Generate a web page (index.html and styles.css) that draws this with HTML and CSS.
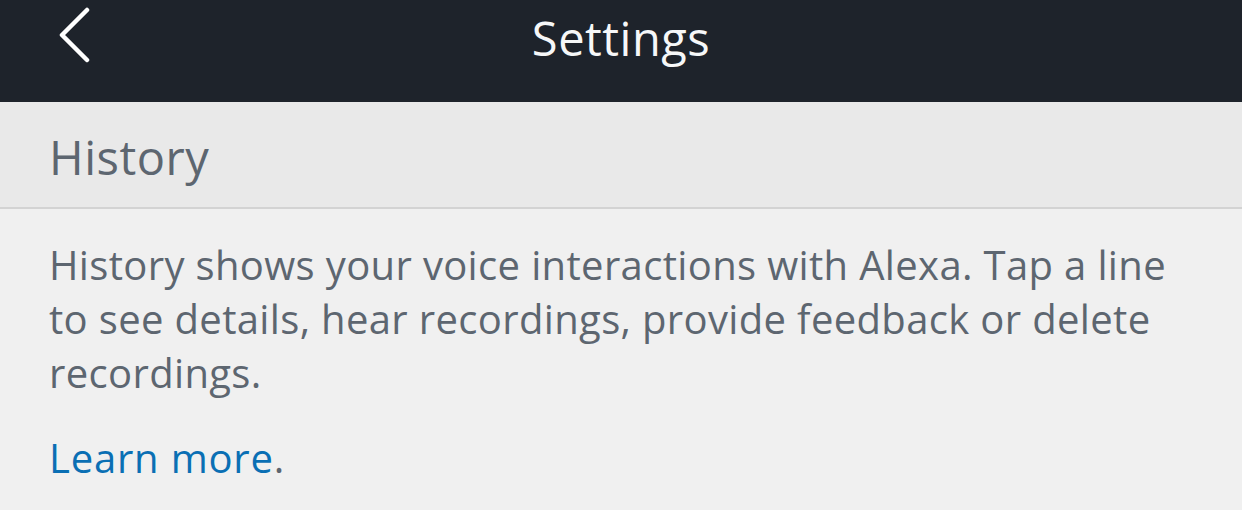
FILE: index.html
```html
<!DOCTYPE html>
<html lang="en">
<head>
<meta charset="UTF-8" />
<meta name="viewport" content="width=device-width, initial-scale=1" />
<title>Settings</title>
<link rel="stylesheet" href="styles.css">
</head>
<body>
  <header class="nav-bar">
    <a class="back-btn" href="#" aria-label="Back">
      <svg width="40" height="64" viewBox="0 0 40 64">
        <path d="M28 8 L3 33 L28 58" fill="none" stroke="#fff" stroke-width="4.5" stroke-linecap="round" stroke-linejoin="round"/>
      </svg>
    </a>
    <h1 class="nav-title">Settings</h1>
  </header>

  <div class="section-head">
    <h2>History</h2>
  </div>

  <div class="section-body">
    <p class="description">History shows your voice interactions with Alexa. Tap a line to see details, hear recordings, provide feedback or delete recordings.</p>
    <p class="more"><a href="#">Learn more</a>.</p>
  </div>
</body>
</html>
```

FILE: styles.css
```css
* {
  box-sizing: border-box;
}

body {
  margin: 0;
  font-family: 'Open Sans', 'Noto Sans', sans-serif;
  background: #f0f0f0;
  color: #5d6670;
}

.nav-bar {
  height: 102px;
  background: #1e232b;
  display: flex;
  align-items: center;
  justify-content: center;
  position: relative;
}

.back-btn {
  position: absolute;
  left: 59px;
  top: 2px;
  display: block;
  line-height: 0;
}

.nav-title {
  margin: 0 0 26px 0;
  font-weight: 400;
  font-size: 47px;
  letter-spacing: 0.5px;
  color: #f6f7f8;
}

.section-head {
  height: 107px;
  background: #e9e9e9;
  border-bottom: 2px solid #d3d3d3;
  padding: 23px 49px 0;
}

.section-head h2 {
  margin: 0;
  font-weight: 400;
  font-size: 47px;
  letter-spacing: 0.5px;
  color: #5d6670;
}

.section-body {
  padding: 29px 49px 0;
}

.description {
  margin: 0;
  font-size: 40px;
  letter-spacing: 0.35px;
  line-height: 54px;
  max-width: 1140px;
}

.more {
  margin: 31px 0 0;
  font-size: 40px;
  letter-spacing: 0.8px;
  line-height: 54px;
}

.more a {
  color: #0a6fb4;
  text-decoration: none;
}
```
